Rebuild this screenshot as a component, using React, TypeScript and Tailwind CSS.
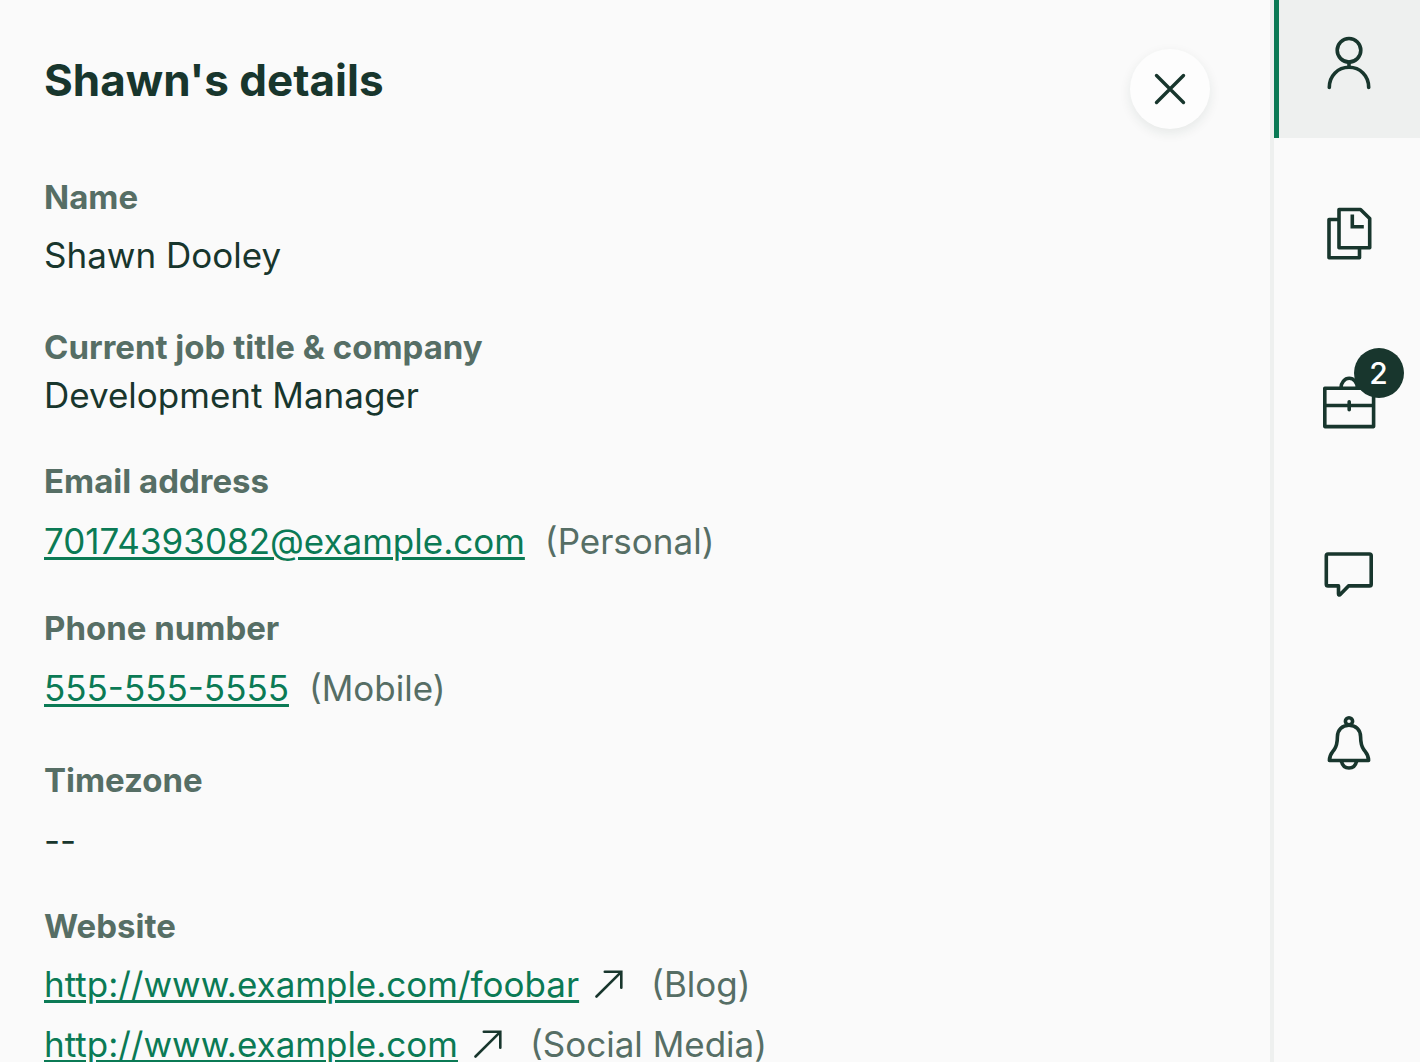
import type { ReactNode } from "react"

type Entry = {
  text: string
  href?: string
  external?: boolean
  note?: string
}

type Detail = {
  label: string
  entries: Entry[]
  labelGap: string
  spacing: string
}

const details: Detail[] = [
  {
    label: "Name",
    entries: [{ text: "Shawn Dooley" }],
    labelGap: "mt-3.5",
    spacing: "mb-12",
  },
  {
    label: "Current job title & company",
    entries: [{ text: "Development Manager" }],
    labelGap: "mt-1",
    spacing: "mb-[42px]",
  },
  {
    label: "Email address",
    entries: [
      { text: "70174393082@example.com", href: "mailto:70174393082@example.com", note: "(Personal)" },
    ],
    labelGap: "mt-4",
    spacing: "mb-[43px]",
  },
  {
    label: "Phone number",
    entries: [{ text: "555-555-5555", href: "tel:555-555-5555", note: "(Mobile)" }],
    labelGap: "mt-4",
    spacing: "mb-12",
  },
  {
    label: "Timezone",
    entries: [{ text: "--" }],
    labelGap: "mt-4",
    spacing: "mb-[42px]",
  },
  {
    label: "Website",
    entries: [
      { text: "http://www.example.com/foobar", href: "http://www.example.com/foobar", external: true, note: "(Blog)" },
      { text: "http://www.example.com", href: "http://www.example.com", external: true, note: "(Social Media)" },
    ],
    labelGap: "mt-3.5",
    spacing: "mb-[42px]",
  },
]

function Icon({ children }: { children: ReactNode }) {
  return (
    <svg
      viewBox="0 0 64 64"
      className="size-16"
      fill="none"
      stroke="currentColor"
      strokeWidth="3.6"
      strokeLinecap="round"
      strokeLinejoin="round"
      aria-hidden="true"
    >
      {children}
    </svg>
  )
}

function UserIcon() {
  return (
    <Icon>
      <circle cx="32" cy="19.300" r="11.8" />
      <path d="M32 31v5M12.3 56.500C12.3 44.500 21 36.300 32 36.300S51.7 44.500 51.7 56.500" />
    </Icon>
  )
}

function FilesIcon() {
  return (
    <Icon>
      <path d="M22 8.5h21.5l9.2 9v29.2H22zM22 18.5H12v38.2h30.5V47" />
      <path d="M35.3 13.500v12.200h11.500" strokeLinecap="butt" strokeLinejoin="miter" />
    </Icon>
  )
}

function BriefcaseIcon() {
  return (
    <Icon>
      <path d="M7.8 17.300h48.8v38.300H7.8zM7.8 34.500h48.8M32.2 30.800v8" />
      <path d="M24 17a8 9.5 0 0 1 16.4 0" />
    </Icon>
  )
}

function ChatIcon() {
  return (
    <Icon>
      <path d="M11 13h41.5c1 0 1.7.7 1.7 1.7v28.500c0 1-.7 1.7-1.7 1.7H31.5l-8.3 8.700c-.7.8-1.7.4-1.7-.7v-8H11c-1 0-1.7-.7-1.7-1.7v-28.500c0-1 .7-1.7 1.7-1.7z" />
    </Icon>
  )
}

function BellIcon() {
  return (
    <Icon>
      <circle cx="32" cy="10.300" r="3.6" />
      <path d="M32 14.300c-7 0-11.600 4.8-11.600 11.500 0 6-.8 9.500-3.200 12.900-2.7 3.6-4.8 5-4.8 10.800h39.200c0-5.8-2.1-7.2-4.8-10.800-2.400-3.400-3.200-6.900-3.200-12.900 0-6.7-4.600-11.500-11.600-11.500z" />
      <path d="M24.5 50.5c1 4.500 4 6.500 7.500 6.500s6.500-2 7.500-6.500" />
    </Icon>
  )
}

function ExternalArrow() {
  return (
    <svg
      viewBox="0 0 28 28"
      className="size-7 shrink-0 text-[#18362d]"
      fill="none"
      stroke="currentColor"
      strokeWidth="2.6"
      strokeLinecap="round"
      strokeLinejoin="miter"
      aria-hidden="true"
    >
      <path d="M1.5 26.500L26.300 1.800M9.800 1.800h16.500v16" />
    </svg>
  )
}

const tabs = [
  { name: "Details", icon: <UserIcon />, active: true },
  { name: "Files", icon: <FilesIcon /> },
  { name: "Jobs", icon: <BriefcaseIcon />, badge: 2 },
  { name: "Messages", icon: <ChatIcon /> },
  { name: "Notifications", icon: <BellIcon /> },
]

function DetailEntry({ entry }: { entry: Entry }) {
  return (
    <dd className="flex items-center text-[35px] leading-[48px] whitespace-nowrap">
      {entry.href ? (
        <a
          href={entry.href}
          className="text-[#0b7a55] underline decoration-[3px] underline-offset-[3px]"
        >
          {entry.text}
        </a>
      ) : (
        <span>{entry.text}</span>
      )}
      {entry.external && (
        <span className="ml-4 mr-2">
          <ExternalArrow />
        </span>
      )}
      {entry.note && <span className="ml-5 text-[#566e65]">{entry.note}</span>}
    </dd>
  )
}

export default function App() {
  return (
    <div className="flex h-screen overflow-hidden bg-[#fafafa] font-['Inter',sans-serif] text-[#18362d]">
      <main className="min-w-0 flex-1 pl-11 pr-[60px] pt-[49px]">
        <header className="mb-12 flex items-start justify-between">
          <h1 className="text-[44px] leading-[62px] font-bold">Shawn's details</h1>
          <button
            type="button"
            aria-label="Close"
            className="flex size-20 items-center justify-center rounded-full bg-[#fdfdfd] shadow-[0_4px_12px_rgba(24,54,45,0.09)]"
          >
            <svg viewBox="0 0 32 32" className="size-8" fill="none" stroke="currentColor" strokeWidth="3.4" strokeLinecap="round">
              <path d="M2.500 2.500l27 27M29.500 2.500l-27 27" />
            </svg>
          </button>
        </header>

        <dl>
          {details.map((detail) => (
            <div key={detail.label} className={detail.spacing}>
              <dt className="text-[33px] leading-10 font-bold text-[#566e65]">{detail.label}</dt>
              <div className={`flex flex-col gap-3 ${detail.labelGap}`}>
                {detail.entries.map((entry) => (
                  <DetailEntry key={entry.text} entry={entry} />
                ))}
              </div>
            </div>
          ))}
        </dl>
      </main>

      <nav aria-label="Candidate" className="flex w-[150px] shrink-0 flex-col gap-8 border-l-4 border-[#eef0ef]">
        {tabs.map((tab) => (
          <button
            key={tab.name}
            type="button"
            aria-label={tab.name}
            className={`flex h-[138px] items-center justify-center border-l-[5px] pr-0.5 pb-3 ${
              tab.active ? "border-[#0b7a55] bg-[#eef0ef]" : "border-transparent"
            }`}
          >
            <span className="relative">
              {tab.icon}
              {tab.badge && (
                <span className="absolute -top-[23px] left-[37px] flex size-[50px] items-center justify-center rounded-full bg-[#18362d] text-[30px] leading-none font-medium text-white">
                  {tab.badge}
                </span>
              )}
            </span>
          </button>
        ))}
      </nav>
    </div>
  )
}
